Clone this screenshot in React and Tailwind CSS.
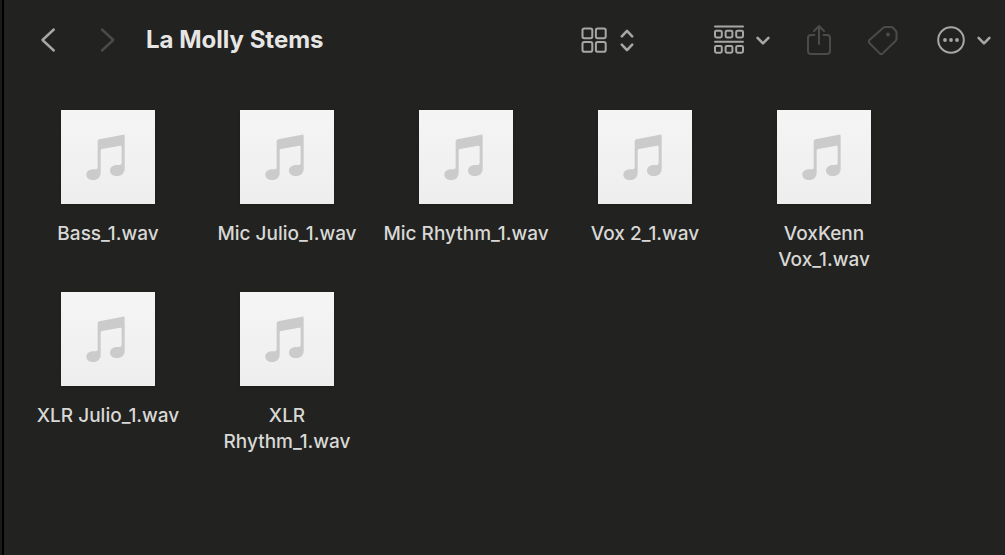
import React, { useState } from 'react';

const FILES = [
    'Bass_1.wav',
    'Mic Julio_1.wav',
    'Mic Rhythm_1.wav',
    'Vox 2_1.wav',
    'VoxKenn Vox_1.wav',
    'XLR Julio_1.wav',
    'XLR Rhythm_1.wav',
];

function Icon({ className, viewBox, width = 2, children }) {
    return (
        <svg
            className={className}
            viewBox={viewBox}
            fill="none"
            stroke="currentColor"
            strokeWidth={width}
            strokeLinecap="round"
            strokeLinejoin="round"
            aria-hidden="true"
        >
            {children}
        </svg>
    );
}

function ChevronDown() {
    return (
        <Icon className="w-4 h-4" viewBox="0 0 16 16" width={2.6}>
            <path d="M2.6 5.9 8 11.3l5.4-5.4" />
        </Icon>
    );
}

function MusicNote() {
    return (
        <svg className="w-full h-full text-[#cbcbcb]" viewBox="0 0 282 282" fill="currentColor" aria-hidden="true">
            <path d="M115 88 186 74Q191 73 191 78V176C191 190 181 198 168 198C155 198 147 191 147 182C147 172 156 165 168 165H176Q182 165 182 159V112Q182 106 177 107L123 117Q119 118 119 122V188C119 202 109 210 97 210C84 210 76 203 76 194C76 185 84 178 97 178H105Q110 178 110 172V94Q110 89 115 88Z" />
        </svg>
    );
}

function Toolbar() {
    return (
        <header className="flex items-center h-20 pl-8 pr-[13px] text-[#a7a7a5]">
            <button aria-label="Back" className="flex">
                <Icon className="w-6 h-7" viewBox="0 0 24 28" width={2.4}>
                    <path d="M17.8 3.5 6.5 14l11.3 10.5" />
                </Icon>
            </button>
            <button aria-label="Forward" disabled className="flex ml-9 text-[#4b4b49]">
                <Icon className="w-6 h-7" viewBox="0 0 24 28" width={2.4}>
                    <path d="M6 3.5 17.3 14 6 24.5" />
                </Icon>
            </button>
            <h1 className="ml-[26px] text-2xl font-bold whitespace-nowrap text-[#e6e6e4]">La Molly Stems</h1>

            <div className="flex items-center ml-auto">
                <button aria-label="View as icons" className="flex items-center gap-3">
                    <Icon className="w-[26px] h-[26px]" viewBox="0 0 26 26">
                        <rect x="1.5" y="1.5" width="9.8" height="9.8" rx="1.8" />
                        <rect x="14.9" y="1.5" width="9.8" height="9.8" rx="1.8" />
                        <rect x="1.5" y="14.9" width="9.8" height="9.8" rx="1.8" />
                        <rect x="14.9" y="14.9" width="9.8" height="9.8" rx="1.8" />
                    </Icon>
                    <Icon className="w-4 h-6" viewBox="0 0 16 24" width={2.6}>
                        <path d="m2.8 8.3 5.2-5.4 5.2 5.4M2.8 16.7l5.2 5.4 5.2-5.4" />
                    </Icon>
                </button>
                <button aria-label="Group items" className="flex items-center gap-2.5 ml-[78px]">
                    <Icon className="w-8 h-[30px]" viewBox="0 0 32 30">
                        <path d="M2 1.5h28M2 16.8h28" />
                        <rect x="2" y="5.7" width="6.8" height="6.8" rx="1.4" />
                        <rect x="12.6" y="5.7" width="6.8" height="6.8" rx="1.4" />
                        <rect x="23.2" y="5.7" width="6.8" height="6.8" rx="1.4" />
                        <rect x="2" y="20.9" width="6.8" height="6.8" rx="1.4" />
                        <rect x="12.6" y="20.9" width="6.8" height="6.8" rx="1.4" />
                        <rect x="23.2" y="20.9" width="6.8" height="6.8" rx="1.4" />
                    </Icon>
                    <ChevronDown />
                </button>
                <button aria-label="Share" disabled className="flex ml-9 text-[#4b4b49]">
                    <Icon className="w-6 h-8" viewBox="0 0 24 32">
                        <path d="M7.5 11H4a3 3 0 0 0-3 3v13a3 3 0 0 0 3 3h16a3 3 0 0 0 3-3V14a3 3 0 0 0-3-3h-3.5M12 20V2M7 7l5-5 5 5" />
                    </Icon>
                </button>
                <button aria-label="Edit tags" disabled className="flex ml-9 text-[#4b4b49]">
                    <Icon className="w-8 h-8" viewBox="0 0 32 32">
                        <path d="M18.500 3h5.500q1.200 0 2 .8l2.700 2.900q.8.8.8 2v5.800q0 1.500-1 2.500L15.700 29.400q-1.500 1.300-2.900 0L2.400 19q-1.300-1.500 0-3L16 4q1.200-1 2.500-1Z" />
                        <circle cx="21" cy="10.500" r="1" fill="currentColor" />
                    </Icon>
                </button>
                <button aria-label="More actions" className="flex items-center gap-[11px] ml-[38px]">
                    <Icon className="w-7 h-7" viewBox="0 0 28 28">
                        <circle cx="14" cy="14" r="12.800" />
                        <g fill="currentColor" stroke="none">
                            <circle cx="8" cy="14" r="1.900" />
                            <circle cx="14" cy="14" r="1.900" />
                            <circle cx="20" cy="14" r="1.900" />
                        </g>
                    </Icon>
                    <ChevronDown />
                </button>
            </div>
        </header>
    );
}

export default function App() {
    const [selected, setSelected] = useState(null);

    return (
        <div className="flex min-h-screen bg-[#222220] font-['Inter','Liberation_Sans',sans-serif]">
            {/* Window edge */}
            <div className="w-1 shrink-0 bg-[#1b1b1a] border-r-2 border-black" />

            <div className="flex-1 min-w-0">
                <Toolbar />
                <main className="grid grid-cols-[repeat(auto-fill,178px)] gap-x-px gap-y-[19px] pl-[15px] pt-[30px]">
                    {FILES.map(name => (
                        <button
                            key={name}
                            aria-pressed={selected === name}
                            onClick={() => setSelected(name)}
                            className="flex flex-col items-center justify-start"
                        >
                            <span className="w-[94px] h-[94px] bg-linear-to-b from-[#f5f5f5] to-[#eeeeee] shadow-sm">
                                <MusicNote />
                            </span>
                            <span className="mt-[17px] px-1.5 text-[19px] leading-[26px] font-medium text-[#d8d8d6]">{name}</span>
                        </button>
                    ))}
                </main>
            </div>
        </div>
    );
}
